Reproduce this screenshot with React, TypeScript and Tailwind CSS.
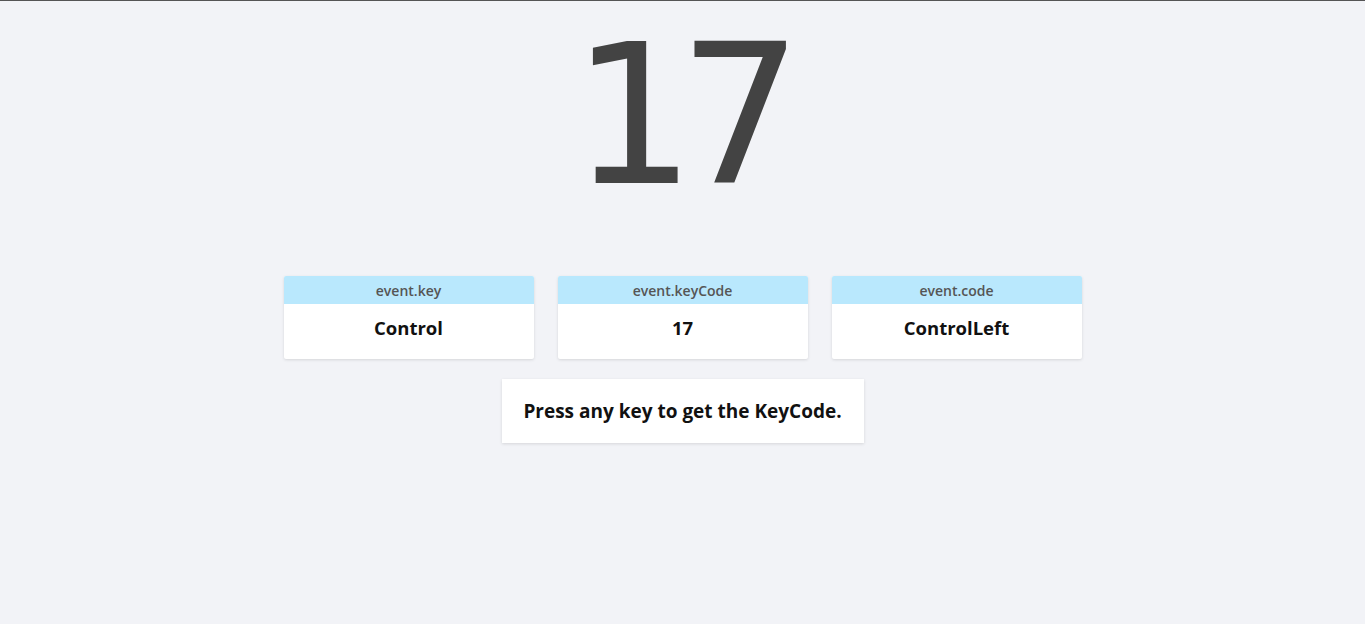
const cards = [
  { label: "event.key", value: "Control" },
  { label: "event.keyCode", value: "17" },
  { label: "event.code", value: "ControlLeft" },
];

export default function App() {
  return (
    <div className="min-h-screen bg-[#f2f3f7] border-t border-[#555555] font-['Open_Sans','Noto_Sans',sans-serif]">
      <div className="pt-[17px] pr-[8px] text-center text-[195px] leading-none tracking-[-17px] text-[#434343] font-['DejaVu_Sans',sans-serif]">
        17
      </div>
      <div className="mt-[63px] flex justify-center gap-6">
        {cards.map((card) => (
          <div key={card.label} className="w-[250px] bg-white shadow-[0_1px_3px_rgba(0,0,0,0.12)] rounded-[2px] overflow-hidden">
            <div className="h-[28px] bg-[#b9e8fd] flex items-center justify-center text-[14px] font-semibold text-[#555555]">
              {card.label}
            </div>
            <div className="h-[55px] pb-[7px] flex items-center justify-center text-[18.5px] font-bold text-[#111111]">
              {card.value}
            </div>
          </div>
        ))}
      </div>
      <div className="mt-[20px] flex justify-center">
        <div className="w-[362px] h-[64px] bg-white shadow-[0_1px_3px_rgba(0,0,0,0.12)] flex items-center justify-center text-[19px] font-bold text-[#111111]">
          Press any key to get the KeyCode.
        </div>
      </div>
    </div>
  );
}
